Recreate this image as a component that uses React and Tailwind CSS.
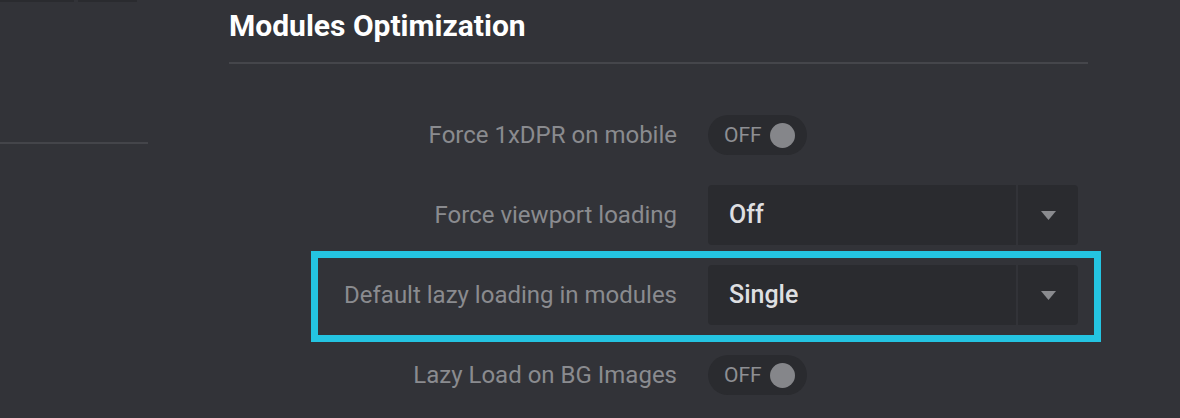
import React from "react";

const font = { fontFamily: "Roboto, 'Liberation Sans', sans-serif" };

const Toggle = () => (
  <div className="flex items-center w-[99px] h-10 rounded-full bg-[#2a2b2f] pl-[16px] gap-[8px]">
    <span className="text-[21px] leading-none text-[#8e8f93]">OFF</span>
    <span className="w-[25px] h-[25px] rounded-full bg-[#85868a]" />
  </div>
);

const Select = ({ value }) => (
  <div className="flex w-[370px] h-[60px] rounded-[4px] bg-[#2a2b2f] overflow-hidden">
    <div className="flex-1 flex items-center pl-[21px] text-[25px] font-medium text-[#dedfe1]">
      {value}
    </div>
    <div className="w-[62px] flex items-center justify-center border-l-2 border-[#323338]">
      <svg width="15" height="9" viewBox="0 0 15 9">
        <path d="M0 0 H15 L7.5 9 Z" fill="#8a8b8f" />
      </svg>
    </div>
  </div>
);

const Row = ({ label, children, highlight }) => (
  <div className="relative flex items-center h-20">
    {highlight && (
      <div className="absolute left-[82px] top-[-4px] w-[790px] h-[91px] border-[7px] border-[#24c4e1]" />
    )}
    <div className="w-[448px] text-right text-[24px] text-[#8a8b8f]">{label}</div>
    <div className="ml-[31px]">{children}</div>
  </div>
);

export default function App() {
  return (
    <div className="w-[1180px] h-[418px] bg-[#323338] flex overflow-hidden" style={font}>
      <aside className="w-[148px] shrink-0">
        <div className="flex gap-[4px]">
          <div className="w-[74px] h-[2px] bg-[#2a2b2f]" />
          <div className="w-[59px] h-[2px] bg-[#2a2b2f]" />
        </div>
        <div className="mt-[140px] h-[2px] bg-[#44454a]" />
      </aside>
      <main className="ml-[81px] w-[859px]">
        <h2 className="pt-[8px] h-[62px] text-[30px] font-bold text-white leading-[36px]">
          Modules Optimization
        </h2>
        <div className="h-[2px] bg-[#45464b]" />
        <div className="pt-[31px]">
          <Row label="Force 1xDPR on mobile">
            <Toggle />
          </Row>
          <Row label="Force viewport loading">
            <Select value="Off" />
          </Row>
          <Row label="Default lazy loading in modules" highlight>
            <Select value="Single" />
          </Row>
          <Row label="Lazy Load on BG Images">
            <Toggle />
          </Row>
        </div>
      </main>
    </div>
  );
}
